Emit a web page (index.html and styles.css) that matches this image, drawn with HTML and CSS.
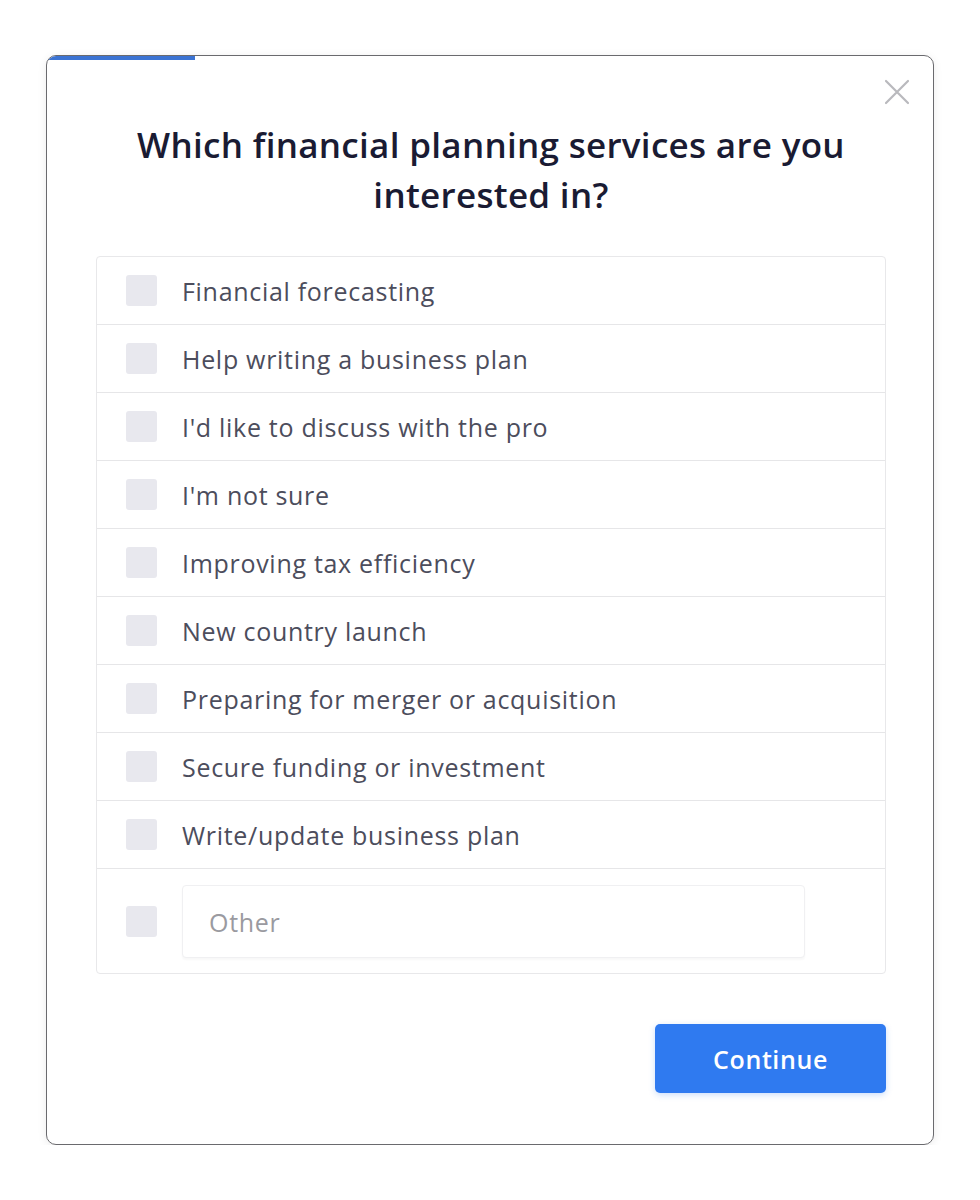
FILE: index.html
```html
<!DOCTYPE html>
<html>
<head>
<meta charset="utf-8">
<link rel="stylesheet" href="styles.css">
</head>
<body>
<div class="modal">
  <div class="progress"></div>
  <button class="close" aria-label="Close">
    <svg width="26" height="26" viewBox="0 0 26 26"><path d="M2 2 L24 24 M24 2 L2 24" stroke="#b9b9bd" stroke-width="2.2" stroke-linecap="round" fill="none"/></svg>
  </button>
  <h1 class="title">Which financial planning services are you interested in?</h1>
  <div class="options">
    <label class="row"><span class="box"></span><span class="label">Financial forecasting</span></label>
    <label class="row"><span class="box"></span><span class="label">Help writing a business plan</span></label>
    <label class="row"><span class="box"></span><span class="label">I'd like to discuss with the pro</span></label>
    <label class="row"><span class="box"></span><span class="label">I'm not sure</span></label>
    <label class="row"><span class="box"></span><span class="label">Improving tax efficiency</span></label>
    <label class="row"><span class="box"></span><span class="label">New country launch</span></label>
    <label class="row"><span class="box"></span><span class="label">Preparing for merger or acquisition</span></label>
    <label class="row"><span class="box"></span><span class="label">Secure funding or investment</span></label>
    <label class="row"><span class="box"></span><span class="label">Write/update business plan</span></label>
    <div class="row other"><span class="box"></span><input class="other-input" type="text" placeholder="Other"></div>
  </div>
  <div class="actions">
    <button class="continue">Continue</button>
  </div>
</div>
</body>
</html>
```
FILE: styles.css
```css
* { box-sizing: border-box; }
html, body { margin: 0; padding: 0; background: #ffffff; }
body {
  font-family: "Open Sans", "Liberation Sans", sans-serif;
  padding: 55px 47px 0 46px;
}
.modal {
  position: relative;
  width: 888px;
  height: 1090px;
  border: 1.5px solid #6a6a6e;
  border-radius: 10px;
  background: #fff;
  box-shadow: 0 2px 10px rgba(0,0,0,0.08);
  padding: 0 47px 0 49px;
  overflow: hidden;
}
.progress {
  width: 147px;
  height: 4px;
  margin-left: -48px;
  background: #3b73d3;
  border-top-left-radius: 8px;
}
.close {
  position: absolute;
  top: 23px;
  right: 23px;
  width: 26px;
  height: 26px;
  padding: 0;
  border: 0;
  background: none;
}
.close svg { display: block; }
.title {
  margin: 60px 0 36px;
  padding: 0 20px;
  text-align: center;
  font-size: 35px;
  line-height: 50px;
  font-weight: 600;
  letter-spacing: 0.3px;
  color: #1a1b33;
}
.options {
  border: 1px solid #e8e8ea;
  border-radius: 4px;
}
.row {
  display: flex;
  align-items: center;
  height: 68px;
  padding-left: 29px;
  border-bottom: 1px solid #e6e6e8;
}
.row.other {
  height: 104px;
  border-bottom: 0;
  padding-top: 1px;
}
.box {
  width: 31px;
  height: 31px;
  border-radius: 3px;
  background: #e8e8ee;
  flex: none;
}
.label {
  margin-left: 25px;
  font-size: 25px;
  font-weight: 500;
  color: #4c4d5c;
  letter-spacing: 0.7px;
}
.other-input {
  margin-left: 25px;
  width: 623px;
  height: 73px;
  border: 1px solid #f0f0f2;
  border-radius: 4px;
  padding: 0 26px;
  font-family: inherit;
  font-size: 25px;
  font-weight: 500;
  letter-spacing: 0.7px;
  color: #4c4d5c;
  background: #fff;
  box-shadow: 0 2px 2px rgba(0,0,0,0.03);
  outline: none;
}
.other-input::placeholder { color: #9a9aa0; }
.actions {
  display: flex;
  justify-content: flex-end;
  margin-top: 50px;
}
.continue {
  width: 231px;
  height: 69px;
  border: 0;
  border-radius: 5px;
  background: #2f7af0;
  color: #fff;
  font-family: inherit;
  font-size: 25px;
  font-weight: 600;
  letter-spacing: 0.6px;
  box-shadow: 0 2px 6px rgba(47,122,240,0.25);
}
```
